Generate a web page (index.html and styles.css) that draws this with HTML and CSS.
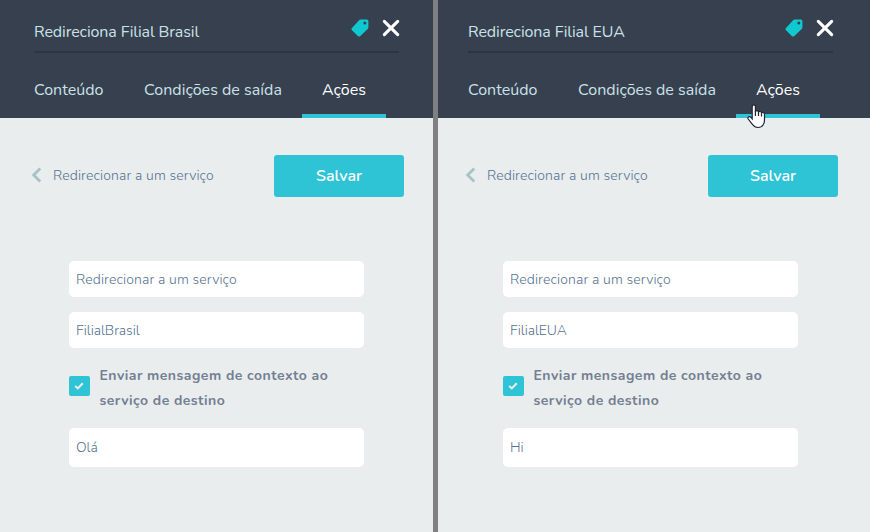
FILE: index.html
```html
<!DOCTYPE html>
<html lang="pt-BR">
<head>
<meta charset="utf-8">
<title>Ações</title>
<link rel="stylesheet" href="styles.css">
</head>
<body>
<svg class="defs" aria-hidden="true">
  <symbol id="tag" viewBox="0 0 18 18"><path fill-rule="evenodd" d="M9.5 .6H15.9Q17.4.6 17.4 2.2V8.2Q17.4 9.2 16.7 9.9L9.4 17Q8.1 18.2 6.8 17L1 11.3Q-.2 10.1 1 8.9L7.9 1.4Q8.5 .6 9.5 .6ZM13.8 2.6a1.5 1.5 0 1 0 0 3a1.5 1.5 0 1 0 0-3Z"/></symbol>
  <symbol id="close" viewBox="0 0 18 18"><path d="M2.3 2.3 15.7 15.7M15.7 2.3 2.3 15.7"/></symbol>
  <symbol id="back" viewBox="0 0 10 16"><path d="M8.7 1.5 2.2 8 8.7 14.5"/></symbol>
  <symbol id="check" viewBox="0 0 10 8"><path d="M1.2 4 3.8 6.4 8.8 1.3"/></symbol>
</svg>
<main class="compare">
  <section class="panel">
    <header class="head">
      <div class="title-row"><span class="title">Redireciona Filial Brasil</span><svg class="tag"><use href="#tag"/></svg><svg class="close"><use href="#close"/></svg></div>
      <nav class="tabs"><a class="tab t1">Conteúdo</a><a class="tab t2">Condições de saída</a><a class="tab t3 active">Ações</a></nav>
    </header>
    <div class="body">
      <div class="actions"><svg class="back"><use href="#back"/></svg><span class="crumb">Redirecionar a um serviço</span><button class="save">Salvar</button></div>
      <div class="form">
        <div class="field wide">Redirecionar a um serviço</div>
        <div class="field">FilialBrasil</div>
        <div class="option"><span class="box"><svg><use href="#check"/></svg></span><p>Enviar mensagem de contexto ao<br>serviço de destino</p></div>
        <div class="field tall">Olá</div>
      </div>
    </div>
  </section>
  <div class="divider"></div>
  <section class="panel second">
    <header class="head">
      <div class="title-row"><span class="title">Redireciona Filial EUA</span><svg class="tag"><use href="#tag"/></svg><svg class="close"><use href="#close"/></svg></div>
      <nav class="tabs"><a class="tab t1">Conteúdo</a><a class="tab t2">Condições de saída</a><a class="tab t3 active">Ações</a></nav>
    </header>
    <div class="body">
      <div class="actions"><svg class="back"><use href="#back"/></svg><span class="crumb">Redirecionar a um serviço</span><button class="save">Salvar</button></div>
      <div class="form">
        <div class="field wide">Redirecionar a um serviço</div>
        <div class="field">FilialEUA</div>
        <div class="option"><span class="box"><svg><use href="#check"/></svg></span><p>Enviar mensagem de contexto ao<br>serviço de destino</p></div>
        <div class="field tall">Hi</div>
      </div>
    </div>
  </section>
</main>
<svg class="cursor" viewBox="0 0 19 25"><path d="M5.2 13.5V2.8Q5.2 1 6.8 1T8.4 2.8V8Q8.6 6.7 10 6.7T11.5 8.3Q12 7.3 13.2 7.5T14.5 9Q15 8.3 16 8.5Q17.5 8.8 17.5 10.5V16Q17.5 19 16 21Q14.5 23.5 11 23.5Q7.5 23.5 5.8 20.8L1.2 15Q.4 13.7 1.5 12.9Q2.8 12 4.2 13.6L5.2 14.8Z"/><path d="M8.4 7.5V12M11.5 8.5V12M14.5 9.3V12.5"/></svg>
</body>
</html>
```

FILE: styles.css
```css
* { box-sizing: border-box; }
body { margin: 0; width: 870px; height: 532px; overflow: hidden; font-family: Nunito, Lato, sans-serif; background: #e9edee; }
svg { display: block; flex: none; }
.defs { position: absolute; width: 0; height: 0; }
.compare { display: flex; height: 532px; }
.panel { width: 433px; flex: none; background: #e9edee; }
.divider { width: 5px; flex: none; background: #808080; }
.second { width: 432px; }
.second .title-row { margin-left: 30px; }
.second .tabs { margin-left: 10px; }
.second .body { margin-left: -4px; }
.head { height: 118px; background: #36404e; overflow: hidden; }
.title-row { display: flex; align-items: flex-start; width: 365px; height: 53px; margin-left: 34px; border-bottom: 2px solid #2d3542; }
.title { width: 317px; flex: none; padding-top: 22px; font-size: 16px; line-height: 20px; letter-spacing: -0.1px; color: #cbe0e8; white-space: nowrap; }
.tag { width: 18px; height: 18px; margin: 18.5px 0 0 .3px; fill: #10c8cf; }
.close { width: 18px; height: 18px; margin: 19px 0 0 13.2px; fill: none; stroke: #fff; stroke-width: 3.1; stroke-linecap: round; }
.tabs { display: flex; height: 65px; margin-left: 14px; }
.tab { height: 65px; padding: 27px 0 0 20px; font-size: 16px; line-height: 20px; color: #cbe0e8; white-space: nowrap; }
.t1 { width: 110px; }
.t2 { width: 178px; letter-spacing: 0.03px; }
.t3 { width: 84px; }
.active { color: #fff; border-bottom: 4px solid #2ec4d6; }
.body { padding-top: 37px; }
.actions { display: flex; align-items: center; height: 42px; padding-left: 31px; font-size: 14px; color: #557291; }
.actions .crumb { width: 221px; margin: -2px 0 0 11px; font-weight: 300; letter-spacing: 0.12px; white-space: nowrap; }
.back { width: 11px; height: 16px; margin-top: -2px; fill: none; stroke: #a6c4c7; stroke-width: 2.8; }
.save { width: 130px; height: 42px; padding: 0; border: 0; border-radius: 3px; background: #2ec4d6; color: #fff; font: 600 16px Nunito, Lato, sans-serif; }
.form { width: 295px; margin: 64px 0 0 69px; }
.field { height: 36px; margin-bottom: 15px; padding-left: 7px; border-radius: 5px; background: #fff; font-size: 14px; font-weight: 300; line-height: 37px; letter-spacing: -0.06px; color: #557291; }
.wide { letter-spacing: 0.12px; }
.option { display: flex; height: 50px; align-items: center; }
.option p { margin: 0 0 0 10px; font-size: 14px; font-weight: bold; line-height: 25px; letter-spacing: 0.46px; color: #747f92; white-space: nowrap; }
.box { display: grid; place-items: center; width: 20.5px; height: 20px; margin-top: -4px; border-radius: 2px; background: #2ec4d6; }
.box svg { width: 10px; height: 8px; fill: none; stroke: #e9edee; stroke-width: 2.1; }
.tall { height: 39px; margin-top: 15px; line-height: 39px; }
.cursor { position: absolute; left: 747px; top: 104px; width: 19px; height: 25px; fill: #fff; stroke: #202532; stroke-width: 1.2; }
```
